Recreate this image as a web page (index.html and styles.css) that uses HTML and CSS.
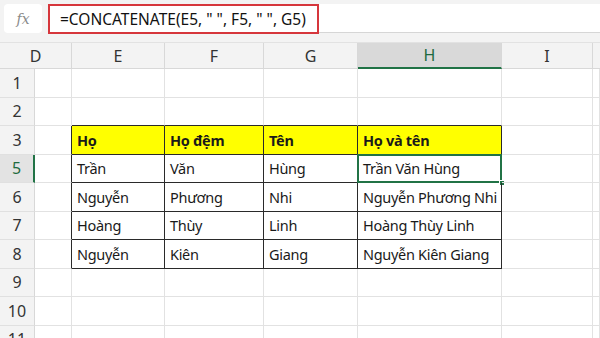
FILE: index.html
```html
<!DOCTYPE html>
<html lang="vi">
<head>
    <meta charset="UTF-8">
    <meta name="viewport" content="width=device-width, initial-scale=1.0">
    <title>CONCATENATE</title>
    <link rel="stylesheet" href="styles.css">
</head>
<body>
    <div class="formula-bar">
        <div class="fx-box"><span class="fx">fx</span></div>
        <div class="formula-input">
            <div class="formula-text">=CONCATENATE(E5, " ", F5, " ", G5)</div>
        </div>
    </div>

    <div class="sheet">
        <!-- column headers (D is partly scrolled under the row numbers) -->
        <div class="col-head first">D</div>
        <div class="col-head">E</div>
        <div class="col-head">F</div>
        <div class="col-head">G</div>
        <div class="col-head active">H</div>
        <div class="col-head">I</div>
        <div class="col-head last"></div>

        <!-- row 1 -->
        <div class="row-head">1</div>
        <div class="cell"></div><div class="cell"></div><div class="cell"></div>
        <div class="cell"></div><div class="cell"></div><div class="cell"></div><div class="cell"></div>

        <!-- row 2 -->
        <div class="row-head">2</div>
        <div class="cell"></div>
        <div class="cell above"></div><div class="cell above"></div><div class="cell above"></div><div class="cell above"></div>
        <div class="cell"></div><div class="cell"></div>

        <!-- row 3 -->
        <div class="row-head">3</div>
        <div class="cell before"></div>
        <div class="cell tbl head">Họ</div>
        <div class="cell tbl head">Họ đệm</div>
        <div class="cell tbl head">Tên</div>
        <div class="cell tbl head">Họ và tên</div>
        <div class="cell"></div><div class="cell"></div>

        <!-- row 5 -->
        <div class="row-head active">5</div>
        <div class="cell before"></div>
        <div class="cell tbl">Trần</div>
        <div class="cell tbl">Văn</div>
        <div class="cell tbl">Hùng</div>
        <div class="cell tbl selected">Trần Văn Hùng<span class="sel-box"></span><span class="sel-handle"></span></div>
        <div class="cell"></div><div class="cell"></div>

        <!-- row 6 -->
        <div class="row-head">6</div>
        <div class="cell before"></div>
        <div class="cell tbl">Nguyễn</div>
        <div class="cell tbl">Phương</div>
        <div class="cell tbl">Nhi</div>
        <div class="cell tbl">Nguyễn Phương Nhi</div>
        <div class="cell"></div><div class="cell"></div>

        <!-- row 7 -->
        <div class="row-head">7</div>
        <div class="cell before"></div>
        <div class="cell tbl">Hoàng</div>
        <div class="cell tbl">Thùy</div>
        <div class="cell tbl">Linh</div>
        <div class="cell tbl">Hoàng Thùy Linh</div>
        <div class="cell"></div><div class="cell"></div>

        <!-- row 8 -->
        <div class="row-head">8</div>
        <div class="cell before"></div>
        <div class="cell tbl">Nguyễn</div>
        <div class="cell tbl">Kiên</div>
        <div class="cell tbl">Giang</div>
        <div class="cell tbl">Nguyễn Kiên Giang</div>
        <div class="cell"></div><div class="cell"></div>

        <!-- row 9 -->
        <div class="row-head">9</div>
        <div class="cell"></div><div class="cell"></div><div class="cell"></div>
        <div class="cell"></div><div class="cell"></div><div class="cell"></div><div class="cell"></div>

        <!-- row 10 -->
        <div class="row-head">10</div>
        <div class="cell"></div><div class="cell"></div><div class="cell"></div>
        <div class="cell"></div><div class="cell"></div><div class="cell"></div><div class="cell"></div>

        <!-- row 11 -->
        <div class="row-head">11</div>
        <div class="cell"></div><div class="cell"></div><div class="cell"></div>
        <div class="cell"></div><div class="cell"></div><div class="cell"></div><div class="cell"></div>
    </div>
</body>
</html>
```

FILE: styles.css
```css
*{
    padding:0;
    margin:0;
    box-sizing: border-box;
    font-family: "Noto Sans", "Open Sans", sans-serif;
    color: rgb(30,30,30);
}
body{
    width:600px;
    height:338px;
    overflow:hidden;
    background-color: #fff;
}
.formula-bar{
    display: flex;
    gap: 6px;
    height: 43px;
    padding: 4px 0 9px 4px;
    background-color: #f3f3f3;
    border-bottom: 1px solid #e2e2e2;
}
.fx-box{
    width: 38px;
    display: flex;
    justify-content: center;
    align-items: center;
    background-color: #fff;
    border-radius: 4px;
}
.fx{
    font-family: "DejaVu Serif", "Liberation Serif", serif;
    font-style: italic;
    font-size: 14px;
    color: #8a8a8a;
}
.formula-input{
    flex: 1;
    display: flex;
    background-color: #fff;
    border-bottom: 1px solid #d6d6d6;
}
.formula-text{
    width: 271px;
    height: 30px;
    padding-left: 10px;
    display: flex;
    align-items: center;
    border: 2px solid #d6363c;
    font-size: 15.5px;
    color: #111;
    white-space: nowrap;
}

.sheet{
    display: grid;
    grid-template-columns: 35px 37px 93px 99px 94px 144px 91px 1fr;
    grid-template-rows: 26px repeat(10, 28.5px);
}
.col-head{
    display: flex;
    justify-content: center;
    align-items: center;
    background-color: #f3f3f3;
    border-right: 1px solid #d8d8d8;
    border-bottom: 1px solid #d8d8d8;
    font-size: 16px;
    color: #333;
}
.col-head.first{
    grid-column: 1 / 3;
}
.col-head.active{
    background-color: #d9d9d9;
    border-bottom: 2px solid #217346;
    color: #1e6b40;
}
.col-head.last{
    border-right: none;
}
.row-head{
    display: flex;
    justify-content: center;
    align-items: center;
    background-color: #f3f3f3;
    border-right: 1px solid #d8d8d8;
    border-bottom: 1px solid #e0e0e0;
    font-size: 16px;
    color: #333;
}
.row-head.active{
    background-color: #e3e3e3;
    border-right: 2px solid #217346;
    color: #1e6b40;
}
.cell{
    position: relative;
    display: flex;
    align-items: center;
    padding-left: 5px;
    border-right: 1px solid #e2e2e2;
    border-bottom: 1px solid #e2e2e2;
    font-size: 14.5px;
    letter-spacing: -0.3px;
    color: #1a1a1a;
    white-space: nowrap;
}
.cell.before{
    border-right-color: #2a2a2a;
}
.cell.above{
    border-bottom-color: #2a2a2a;
}
.cell.tbl{
    border-right-color: #2a2a2a;
    border-bottom-color: #2a2a2a;
}
.cell.head{
    background-color: #ffff00;
    font-weight: 700;
}
.sel-box{
    position: absolute;
    top: -1px;
    left: -1px;
    right: -1px;
    bottom: -1px;
    border: 2px solid #217346;
}
.sel-handle{
    position: absolute;
    right: -4px;
    bottom: -4px;
    width: 6px;
    height: 6px;
    background-color: #217346;
    border: 1px solid #fff;
}
```
